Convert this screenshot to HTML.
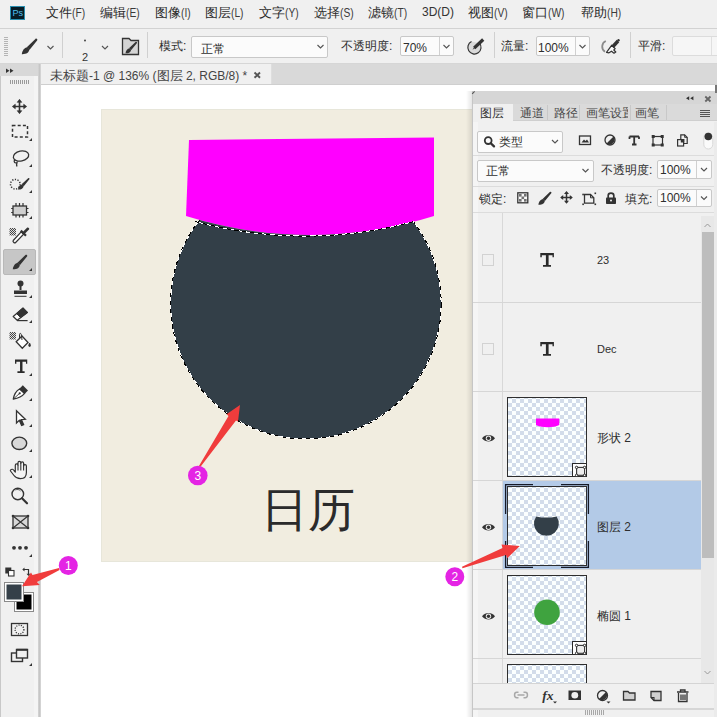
<!DOCTYPE html>
<html><head><meta charset="utf-8">
<style>
*{box-sizing:border-box;margin:0;padding:0}
html,body{width:717px;height:717px;overflow:hidden;background:#f0f0f0;font-family:"Liberation Sans",sans-serif;color:#2e2e2e;font-size:12px;position:relative}
.a{position:absolute}
.t{position:absolute;white-space:nowrap;line-height:1}
svg.o{position:absolute;left:0;top:0;width:717px;height:717px;overflow:visible}
.chk{border:1px solid #2e2e2e;background-color:#fbffff;background-image:linear-gradient(45deg,#d2dcea 25%,transparent 25%,transparent 75%,#d2dcea 75%),linear-gradient(45deg,#d2dcea 25%,transparent 25%,transparent 75%,#d2dcea 75%);background-size:8px 8px;background-position:0 1px,4px 5px}
.box{position:absolute;background:#fbfbfb;border:1px solid #c8c8c8;border-radius:2px}
</style></head><body>
<!-- menu bar -->
<div class="a" style="left:10px;top:6px;width:15px;height:14px;background:#071c26;border:1px solid #2a8fb0"></div>
<div class="t" style="left:12.5px;top:8.5px;font-size:9px;color:#52c0ee">Ps</div>
<div class="t" style="left:46px;top:6px;font-size:13px;color:#2a2a2a">文件<span style="font-size:12.5px;color:#3a3a3a;display:inline-block;transform:scaleX(0.82);transform-origin:0 0">(F)</span></div>
<div class="t" style="left:100px;top:6px;font-size:13px;color:#2a2a2a">编辑<span style="font-size:12.5px;color:#3a3a3a;display:inline-block;transform:scaleX(0.82);transform-origin:0 0">(E)</span></div>
<div class="t" style="left:155px;top:6px;font-size:13px;color:#2a2a2a">图像<span style="font-size:12.5px;color:#3a3a3a;display:inline-block;transform:scaleX(0.82);transform-origin:0 0">(I)</span></div>
<div class="t" style="left:205px;top:6px;font-size:13px;color:#2a2a2a">图层<span style="font-size:12.5px;color:#3a3a3a;display:inline-block;transform:scaleX(0.82);transform-origin:0 0">(L)</span></div>
<div class="t" style="left:259px;top:6px;font-size:13px;color:#2a2a2a">文字<span style="font-size:12.5px;color:#3a3a3a;display:inline-block;transform:scaleX(0.82);transform-origin:0 0">(Y)</span></div>
<div class="t" style="left:314px;top:6px;font-size:13px;color:#2a2a2a">选择<span style="font-size:12.5px;color:#3a3a3a;display:inline-block;transform:scaleX(0.82);transform-origin:0 0">(S)</span></div>
<div class="t" style="left:368px;top:6px;font-size:13px;color:#2a2a2a">滤镜<span style="font-size:12.5px;color:#3a3a3a;display:inline-block;transform:scaleX(0.82);transform-origin:0 0">(T)</span></div>
<div class="t" style="left:422px;top:6px;font-size:12px;color:#333">3D(D)</div>
<div class="t" style="left:468px;top:6px;font-size:13px;color:#2a2a2a">视图<span style="font-size:12.5px;color:#3a3a3a;display:inline-block;transform:scaleX(0.82);transform-origin:0 0">(V)</span></div>
<div class="t" style="left:522px;top:6px;font-size:13px;color:#2a2a2a">窗口<span style="font-size:12.5px;color:#3a3a3a;display:inline-block;transform:scaleX(0.82);transform-origin:0 0">(W)</span></div>
<div class="t" style="left:581px;top:6px;font-size:13px;color:#2a2a2a">帮助<span style="font-size:12.5px;color:#3a3a3a;display:inline-block;transform:scaleX(0.82);transform-origin:0 0">(H)</span></div>
<div class="a" style="left:0;top:28px;width:717px;height:1px;background:#d2d2d2"></div>

<!-- options bar -->
<div class="a" style="left:0;top:63px;width:717px;height:1px;background:#d6d6d6"></div>
<div class="a" style="left:62px;top:32px;width:1px;height:26px;background:#d0d0d0"></div>
<div class="a" style="left:147px;top:32px;width:1px;height:26px;background:#d0d0d0"></div>
<div class="a" style="left:494px;top:32px;width:1px;height:26px;background:#d0d0d0"></div>
<div class="a" style="left:630px;top:32px;width:1px;height:26px;background:#d0d0d0"></div>
<div class="t" style="left:82px;top:52px;font-size:11px;color:#333">2</div>
<div class="t" style="left:159px;top:40px">模式:</div>
<div class="box" style="left:191px;top:36px;width:137px;height:22px"></div>
<div class="t" style="left:201px;top:43px">正常</div>
<div class="t" style="left:341px;top:40px">不透明度:</div>
<div class="box" style="left:400px;top:36px;width:54px;height:20px"></div>
<div class="a" style="left:439px;top:37px;width:1px;height:18px;background:#d0d0d0"></div>
<div class="t" style="left:403px;top:41.5px">70%</div>
<div class="t" style="left:501px;top:40px">流量:</div>
<div class="box" style="left:536px;top:36px;width:54px;height:20px"></div>
<div class="a" style="left:575px;top:37px;width:1px;height:18px;background:#d0d0d0"></div>
<div class="t" style="left:538px;top:41.5px">100%</div>
<div class="t" style="left:638px;top:40px">平滑:</div>
<div class="box" style="left:672px;top:36px;width:60px;height:20px;background:#f6f6f6;border-color:#dcdcdc"></div>
<div class="a" style="left:711px;top:37px;width:1px;height:18px;background:#e0e0e0"></div>

<!-- toolbar -->
<div class="a" style="left:0;top:64px;width:40px;height:653px;background:#f0f0f0;border-left:1px solid #c8c8c8"></div>
<div class="a" style="left:0;top:64px;width:39px;height:12px;background:#d8d8d8"></div>
<div class="a" style="left:34px;top:76px;width:4px;height:641px;background:#f4f4f4"></div>
<div class="a" style="left:38px;top:64px;width:3px;height:653px;background:linear-gradient(to right,#d6d6d6,#c6c6c6,#dadada)"></div>
<div class="a" style="left:3px;top:249px;width:33px;height:26px;background:#c6c6c6;border-radius:2px;border:1px solid #b8b8b8"></div>

<!-- document area -->
<div class="a" style="left:41px;top:64px;width:676px;height:21px;background:#d9d9d9"></div>
<div class="a" style="left:41px;top:64px;width:231px;height:21px;background:#f0f0f0;border-right:1px solid #dedede"></div>
<div class="a" style="left:41px;top:84px;width:676px;height:1px;background:#cfcfcf"></div>
<div class="t" style="left:50px;top:69px;color:#444"><span style="font-size:13px;letter-spacing:0">未标题</span>-1 @ 136% (<span style="font-size:13px;letter-spacing:0">图层</span> 2, RGB/8) *</div>
<div class="a" style="left:41px;top:85px;width:676px;height:632px;background:#ffffff"></div>
<div class="a" style="left:101px;top:109px;width:380px;height:453px;background:#f1ede0;box-shadow:inset 0 0 0 1px #e7e6da"></div>
<div class="t" style="left:261px;top:486px;font-size:47px;color:#2b2b2b">日历</div>
<svg class="o" viewBox="0 0 717 717">
<g id="canvas">
<defs>
<clipPath id="belowArc"><path d="M100,216 L186,216 A414,414 0 0 0 434,216 L480,216 L480,600 L100,600 Z"/></clipPath>
</defs>
<path d="M189,140 L434,137.4 L434,216 A414,414 0 0 1 186,216 Z" fill="#ff00ff"/>
<g clip-path="url(#belowArc)">
<circle cx="305.9" cy="303.7" r="135.3" fill="#333f48"/>
<circle cx="305.9" cy="303.7" r="135.3" fill="none" stroke="#fff" stroke-width="1" shape-rendering="crispEdges"/>
<circle cx="305.9" cy="303.7" r="135.3" fill="none" stroke="#000" stroke-width="1" stroke-dasharray="4,4" shape-rendering="crispEdges"/>
</g>
<path d="M195.5,221.5 A414,414 0 0 0 414,221.5" fill="none" stroke="#fff" stroke-width="1" shape-rendering="crispEdges"/>
<path d="M195.5,221.5 A414,414 0 0 0 414,221.5" fill="none" stroke="#000" stroke-width="1" stroke-dasharray="4,4" shape-rendering="crispEdges"/>
</g>

</svg>

<!-- layers panel -->
<div class="a" style="left:466px;top:91px;width:6px;height:626px;background:linear-gradient(to right,rgba(0,0,0,0),rgba(0,0,0,0.10))"></div>
<div class="a" id="panel" style="left:472px;top:91px;width:245px;height:626px;background:#f0f0f0;border-left:1px solid #c6c6c6"></div>
<div class="a" style="left:473px;top:91px;width:5px;height:626px;background:#f5f5f5"></div>
<div class="a" style="left:473px;top:91px;width:244px;height:13px;background:#d6d6d6"></div>
<div class="a" style="left:473px;top:104px;width:244px;height:17px;background:#dadada;border-bottom:1px solid #cfcfcf"></div>
<div class="a" style="left:473px;top:104px;width:40px;height:18px;background:#f0f0f0"></div>
<div class="a" style="left:547px;top:105px;width:1px;height:15px;background:#c8c8c8"></div>
<div class="a" style="left:579px;top:105px;width:1px;height:15px;background:#c8c8c8"></div>
<div class="a" style="left:630px;top:105px;width:1px;height:15px;background:#c8c8c8"></div>
<div class="a" style="left:666px;top:105px;width:1px;height:15px;background:#c8c8c8"></div>
<div class="t" style="left:480px;top:107px;color:#333">图层</div>
<div class="t" style="left:520px;top:107px;color:#484848">通道</div>
<div class="t" style="left:554px;top:107px;color:#484848">路径</div>
<div class="t" style="left:586px;top:107px;color:#484848;width:42px;overflow:hidden">画笔设置</div>
<div class="t" style="left:635px;top:107px;color:#484848">画笔</div>

<div class="box" style="left:477px;top:131px;width:86px;height:22px"></div>
<div class="t" style="left:499px;top:136px">类型</div>
<div class="a" style="left:473px;top:155px;width:244px;height:1px;background:#dcdcdc"></div>
<div class="box" style="left:477px;top:160px;width:117px;height:22px"></div>
<div class="t" style="left:486px;top:165px">正常</div>
<div class="t" style="left:601px;top:164px">不透明度:</div>
<div class="box" style="left:657px;top:160px;width:55px;height:19px"></div>
<div class="a" style="left:696px;top:161px;width:1px;height:17px;background:#d0d0d0"></div>
<div class="t" style="left:660px;top:164px">100%</div>
<div class="a" style="left:473px;top:186px;width:244px;height:1px;background:#dcdcdc"></div>
<div class="t" style="left:479px;top:193px">锁定:</div>
<div class="t" style="left:625px;top:193px">填充:</div>
<div class="box" style="left:657px;top:189px;width:55px;height:18px"></div>
<div class="a" style="left:696px;top:190px;width:1px;height:16px;background:#d0d0d0"></div>
<div class="t" style="left:660px;top:192px">100%</div>
<div class="a" style="left:473px;top:212px;width:244px;height:1px;background:#dcdcdc"></div>

<!-- layer rows -->

<div class="a" style="left:502px;top:213px;width:1px;height:470px;background:#d8d8d8"></div>
<div class="a" style="left:473px;top:302px;width:228px;height:1px;background:#d6d6d6"></div>
<div class="a" style="left:473px;top:391px;width:228px;height:1px;background:#d6d6d6"></div>
<div class="a" style="left:473px;top:480px;width:228px;height:1px;background:#d6d6d6"></div>
<div class="a" style="left:503px;top:481px;width:198px;height:88px;background:#b3cae7"></div>
<div class="a" style="left:473px;top:569px;width:228px;height:1px;background:#d6d6d6"></div>
<div class="a" style="left:473px;top:658px;width:228px;height:1px;background:#d6d6d6"></div>
<div class="a" style="left:482px;top:254px;width:12px;height:12px;border:1px solid #d2d2d2"></div>
<div class="a" style="left:482px;top:343px;width:12px;height:12px;border:1px solid #d2d2d2"></div>
<div class="t" style="left:597px;top:255px;font-size:11px">23</div>
<div class="t" style="left:597px;top:344px;font-size:11px">Dec</div>
<div class="t" style="left:597px;top:432px">形状 2</div>
<div class="t" style="left:597px;top:521px">图层 2</div>
<div class="t" style="left:597px;top:610px">椭圆 1</div>
<!-- thumbnails -->
<div class="a chk" style="left:507px;top:397px;width:80px;height:80px"></div>
<div class="a chk" style="left:507px;top:486px;width:80px;height:80px"></div>
<div class="a chk" style="left:507px;top:575px;width:80px;height:80px"></div>
<div class="a chk" style="left:507px;top:664px;width:80px;height:19px;border-bottom:none"></div>
<!-- scrollbar -->
<div class="a" style="left:701px;top:216px;width:13px;height:467px;background:#e8e8e8"></div>
<div class="a" style="left:702px;top:232px;width:12px;height:326px;background:#bdbdbd"></div>
<!-- bottom bar -->
<div class="a" style="left:473px;top:683px;width:244px;height:1px;background:#d4d4d4"></div>
<div class="a" style="left:473px;top:684px;width:244px;height:24px;background:#f0f0f0"></div>
<div class="a" style="left:473px;top:708px;width:244px;height:2px;background:#d6d6d6"></div>
<div class="a" style="left:714px;top:122px;width:3px;height:595px;background:#ebebeb"></div>
<div class="a" style="left:715px;top:85px;width:2px;height:8px;background:#777"></div>


<svg class="o" viewBox="0 0 717 717" id="icons">
<defs><g id="brushI"><path d="M5.0,-7.0 L13.6,-15.3 C14.6,-16.3 16.3,-14.7 15.3,-13.7 L7.8,-4.5 Z" fill="#333"/><path d="M0,0 C0.3,-3.2 2.4,-6.6 5.6,-6.9 L7.6,-4.9 C7.4,-1.6 4.2,0.2 0,0 Z" fill="#333"/></g><pattern id="chk1" width="2" height="2" patternUnits="userSpaceOnUse"><rect width="1" height="1" fill="#444"/><rect x="1" y="1" width="1" height="1" fill="#444"/><rect x="1" width="1" height="1" fill="#ddd"/><rect y="1" width="1" height="1" fill="#ddd"/></pattern></defs>
<g id="tb" fill="none" stroke="#333" stroke-width="1.6">
<!-- >> header -->
<path d="M6,68.5 L9.5,70.7 L6,73 Z M10,68.5 L13.5,70.7 L10,73 Z" fill="#333" stroke="none"/>
<g stroke="#9a9a9a" stroke-width="1"><path d="M10.5,80V84M12.5,80V84M14.5,80V84M16.5,80V84M18.5,80V84M20.5,80V84M22.5,80V84M24.5,80V84M26.5,80V84M28.5,80V84"/></g>
<!-- move -->
<path d="M14,106.5H25M19.5,101V112" stroke-width="1.6"/>
<path d="M12.3,106.5L15.3,104.2V108.8Z M26.7,106.5L23.7,104.2V108.8Z M19.5,99.3L17.2,102.3H21.8Z M19.5,113.7L17.2,110.7H21.8Z" fill="#333" stroke="#333" stroke-width="0.6" stroke-linejoin="round"/>
<!-- marquee -->
<rect x="12.5" y="125.5" width="15" height="11.5" stroke-dasharray="3,2.2" stroke-width="1.5"/>
<!-- lasso -->
<ellipse cx="21" cy="156" rx="7.8" ry="5" transform="rotate(-12 21 156)" stroke-width="1.3"/>
<path d="M15,159.5 C13,162 15,163.5 17,162.5 C16.5,164 16.5,165.5 17,166.5" stroke-width="1.3"/>
<!-- quick select -->
<circle cx="15.3" cy="184.2" r="4.8" stroke-dasharray="1.2,1.5" stroke-width="1.5"/>
<use href="#brushI" transform="translate(17.9,189.6) scale(0.75)" stroke="none"/>
<!-- crop/content -->
<rect x="13" y="206" width="13.5" height="9" fill="#cfcfcf" stroke-width="1.3"/>
<path d="M11.2,208.5H13M11.2,212.5H13M26.5,208.5H28.5M26.5,212.5H28.5M16,203V206M19.5,203V206M23,203V206M16,215V217.5M19.5,215V217.5M23,215V217.5" stroke-width="1.2"/>
<!-- eyedropper -->
<rect x="9.5" y="228" width="6.5" height="7.5" fill="url(#chk1)" stroke="none"/>
<path d="M21.2,231.8 L13.2,240.5 C12.4,241.5 14.4,243.5 15.4,242.7 L23.6,234.2 Z" fill="#fff" stroke-width="1.2"/>
<path d="M20.8,230.6 L26,235.8" stroke-width="2.2"/>
<path d="M22.3,232.5 L27,227.8 C28,226.8 30,228.5 29,229.6 L24.3,234.3Z" fill="#333" stroke="none"/>
<!-- brush selected -->
<use href="#brushI" transform="translate(12.8,269.2) scale(0.93)" stroke="none"/>
<!-- stamp -->
<circle cx="20.5" cy="283.5" r="3" fill="#333" stroke="none"/>
<path d="M20.5,285V290" stroke-width="2"/>
<path d="M14,290.5H27V294H14Z" fill="#333" stroke="none"/>
<path d="M14.5,296.3H26.5" stroke-width="1"/>
<!-- eraser -->
<path d="M23,308 L27.4,312.5 L17.2,320.3 L13.2,316.5 Z" fill="#fff" stroke-width="1.2" stroke-linejoin="round"/>
<path d="M23,308 L27.4,312.5 L20.6,317.6 L16.6,313.6 Z" fill="#333" stroke="#333" stroke-width="1"/>
<path d="M17,320.6 H27.6" stroke-width="1.2"/>
<!-- bucket -->
<rect x="9.5" y="332" width="6.5" height="7.5" fill="url(#chk1)" stroke="none"/>
<path d="M16.2,341.8 L22,336 L28,342.5 L22.3,348.3Z" stroke-width="1.3" fill="#fff"/>
<path d="M19.5,338.5 L19.5,334.5 C19.5,333 21,333 21.3,334.5 L22,340" stroke-width="1"/>
<path d="M29.6,343 C28.5,345 28.3,346.5 29.6,346.5 C30.9,346.5 30.7,345 29.6,343Z" fill="#333" stroke-width="0.8"/>
<!-- T -->
<path d="M540.3,253 H553.9 V257.3 H552.5 V255.2 H548.6 V265 H551 V266.8 H543 V265 H545.9 V255.2 H541.8 V257.3 H540.3 Z" fill="#2a2a2a" stroke="none" transform="translate(15,359.6) scale(0.9,0.97) translate(-540.3,-253)"/>
<!-- pen -->
<path d="M19.6,389 C15.6,391.2 14,395 13.3,399.1 C17.4,398.4 21.8,396.8 24.6,393.4 Z" fill="#fff" stroke-width="1.3" stroke-linejoin="round"/>
<path d="M19.2,388.9 L22.8,385.3 L28,390.4 L24.8,393.8 Z" fill="#333" stroke="none"/>
<circle cx="19.7" cy="393.3" r="1.1" fill="#333" stroke="none"/>
<path d="M13.6,398.8 L19,393.9" stroke-width="0.9"/>
<!-- path select -->
<path d="M16.5,410.8 V423 L19.3,420.3 L21.6,425.5 L23.6,424.6 L21.3,419.5 L25.3,419.3 Z" fill="#fff" stroke-width="1.3" stroke-linejoin="miter"/>
<path d="M19.3,420.3 L21.6,425.5 L23.6,424.6 L21.3,419.5Z" fill="#333" stroke="none"/>
<!-- ellipse -->
<ellipse cx="19.3" cy="443.3" rx="7.4" ry="6.2" fill="#d8d8d8" stroke-width="1.4"/>
<!-- hand -->
<path d="M10.8,469.8 C11.8,468.8 13,469.2 14,470.5 L15.3,472 V465.3 C15.3,463.5 18,463.5 18,465.3 V462.8 C18,461 20.8,461 20.8,462.8 V463.3 C20.8,461.5 23.6,461.5 23.6,463.3 V466 C23.6,464.2 26.4,464.2 26.4,466 V472.5 C26.4,476.5 24,478.6 20.5,478.6 C17.5,478.6 15.5,477.5 14,475.5 L10.5,471 C10.2,470.5 10.3,470.1 10.8,469.8Z" fill="#f4f4f4" stroke-width="1.2" stroke-linejoin="round"/>
<path d="M18,465.3V470.5M20.8,462.8V470.5M23.6,463.3V470.5" stroke-width="1.1"/>
<!-- zoom -->
<circle cx="17.8" cy="494" r="5.8" stroke-width="1.4"/>
<path d="M22,498.3 L27,503.3" stroke-width="2.2" stroke-linecap="round"/>
<path d="M15.5,490 C17,489 19.5,489.5 20.5,491" stroke-width="0.8"/>
<!-- frame -->
<rect x="13" y="516" width="15" height="12" fill="#d8d8d8" stroke-width="1.3"/>
<path d="M13,516 L28,528 M28,516 L13,528" stroke-width="1.2"/>
<g fill="#333" stroke="none"><circle cx="13" cy="516" r="1.3"/><circle cx="28" cy="516" r="1.3"/><circle cx="13" cy="528" r="1.3"/><circle cx="28" cy="528" r="1.3"/></g>
<!-- dots -->
<g fill="#333" stroke="none"><circle cx="14" cy="547.8" r="1.9"/><circle cx="20" cy="547.8" r="1.9"/><circle cx="26" cy="547.8" r="1.9"/></g>
<!-- triangles -->
<g fill="#333" stroke="none">
<path d="M29,141 L32,138 V141Z M29,167 L32,164 V167Z M29,193 L32,190 V193Z M29,219 L32,216 V219Z M29,271 L32,268 V271Z M29,298 L32,295 V298Z M29,323 L32,320 V323Z M29,376 L32,373 V376Z M29,401 L32,398 V401Z M29,427 L32,424 V427Z M29,452 L32,449 V452Z M29,478 L32,475 V478Z M29,557 L32,554 V557Z M29,666 L32,663 V666Z"/>
</g>
<!-- default colors -->
<rect x="5.3" y="567.5" width="6" height="6" fill="#333" stroke="none"/>
<rect x="8.5" y="570.5" width="5.5" height="5.5" fill="#fff" stroke-width="1.1"/>
<!-- swap -->
<path d="M23,569.5 H28.5 V575" stroke-width="1.2"/>
<path d="M22.3,569.5 L24.5,567.5 V571.5Z M28.5,576 L26.5,573.8 H30.5Z" fill="#333" stroke="none"/>
<!-- swatches -->
<rect x="14.5" y="592.5" width="19" height="19" fill="#fff" stroke="#8a8a8a" stroke-width="1"/>
<rect x="16.5" y="594.5" width="15" height="15" fill="#000" stroke="none"/>
<rect x="4.5" y="582.5" width="19" height="19" fill="#fff" stroke="#8a8a8a" stroke-width="1"/>
<rect x="6.5" y="584.5" width="15" height="15" fill="#354049" stroke="none"/>
<!-- quick mask -->
<rect x="11.5" y="623.5" width="16" height="12" stroke-width="1.3"/>
<circle cx="19.5" cy="629.5" r="4.4" stroke-dasharray="1.1,1.3" stroke-width="1.3"/>
<!-- screen mode -->
<rect x="11.5" y="653" width="11" height="8.5" stroke-width="1.4" fill="#f0f0f0"/>
<rect x="16.5" y="649.5" width="11" height="8.5" stroke-width="1.4" fill="#f0f0f0"/>
<path d="M16.5,649.8H27.5" stroke-width="2"/>
</g>
</svg>
<svg class="o" viewBox="0 0 717 717">
<g id="panelicons" fill="none" stroke="#333" stroke-width="1.3">
<!-- options bar icons -->
<g stroke="#b4b4b4" stroke-width="1"><path d="M4,37.5H8M4,39.5H8M4,41.5H8M4,43.5H8M4,45.5H8M4,47.5H8M4,49.5H8M4,51.5H8M4,53.5H8M4,55.5H8"/></g>
<use href="#brushI" transform="translate(21.8,54.2) scale(1.0)" stroke="none"/>
<path d="M47.5,46 L50.5,49 L53.5,46" stroke="#555" stroke-width="1.15"/>
<circle cx="85" cy="40.5" r="0.9" fill="#333" stroke="none"/>
<path d="M102,46 L105,49 L108,46" stroke="#555" stroke-width="1.15"/>
<path d="M122.5,38.5 H129 L131,40.5 H138.5 V54.5 H122.5Z" fill="#d4d4d4" stroke-width="1.3"/>
<use href="#brushI" transform="translate(125.5,53.3) scale(0.74)" stroke="none"/>
<path d="M317.5,45 L320.5,48 L323.5,45" stroke="#555" stroke-width="1.15"/>
<path d="M443.5,45 L446.5,48 L449.5,45" stroke="#555" stroke-width="1.15"/>
<path d="M579.5,45 L582.5,48 L585.5,45" stroke="#555" stroke-width="1.15"/>
<!-- airbrush 1 -->
<path d="M479.5,43.2 A6.6,6.6 0 1 1 471.5,41.5" fill="#dadada" stroke-width="1.2"/>
<path d="M474.2,48 L483.2,39.5" stroke-width="3.2"/>
<path d="M472.5,49.8 L474.8,46.3 L476,47.6Z" fill="#333" stroke="none"/>
<!-- airbrush 2 -->
<path d="M605.8,41 A6.2,6.2 0 0 0 605,51.8" stroke="#8a8a8a" stroke-width="1.8"/>
<path d="M606.5,52.3 L611.8,45.2 L615.2,48.6 L613.8,50 L615.8,52 L614,53.2 L611.5,51.2 L609,52.8Z" fill="#f8f8f8" stroke-width="1.2" stroke-linejoin="round"/>
<path d="M612.5,47 L618,41" stroke-width="3.4"/>
<circle cx="618.5" cy="40.3" r="1.2" fill="#333" stroke="none"/>
<path d="M254.5,72.5 L260,77.8 M260,72.5 L254.5,77.8" stroke="#555" stroke-width="1.9"/>
<!-- panel header -->
<path d="M472.2,93.8 L474.6,91.3" stroke="#555" stroke-width="1.1"/>
<path d="M686,98.3 L689.2,96.3 V100.3Z M690.2,98.3 L693.4,96.3 V100.3Z" fill="#333" stroke="none"/>
<path d="M705.3,96.5 L710.5,101.5 M710.5,96.5 L705.3,101.5" stroke="#666" stroke-width="1.8"/>
<path d="M700,110.5H710M700,112.5H710M700,114.5H710M700,116.5H710" stroke="#555" stroke-width="1"/>
<!-- search row -->
<circle cx="488.2" cy="140.6" r="3.4" stroke-width="1.8"/>
<path d="M490.8,143.2 L494,146.4" stroke-width="2.3" stroke-linecap="round"/>
<path d="M552,140 L555,143 L558,140" stroke="#555" stroke-width="1.15"/>
<rect x="579.5" y="136" width="11" height="8.5" stroke-width="1.3"/>
<path d="M581.5,142.5 L584,139.5 L585.5,141 L587,139.5 L589,142.5Z" fill="#333" stroke="none"/>
<circle cx="610" cy="140" r="5" stroke-width="1.3"/>
<path d="M613.5,136.5 A5,5 0 0 1 606.5,143.5Z" fill="#333" stroke="none"/>
<path d="M629.5,136.5H639M629.5,136.5V139M639,136.5V139M634.2,136.5V144.5M632,144.5H636.5" stroke-width="1.8"/>
<rect x="653" y="136.5" width="9.5" height="8.5" stroke-width="1.2"/>
<g fill="#333" stroke="none"><rect x="651.7" y="135" width="3" height="3"/><rect x="660.7" y="135" width="3" height="3"/><rect x="651.7" y="143.5" width="3" height="3"/><rect x="660.7" y="143.5" width="3" height="3"/></g>
<path d="M680.8,139 V134.8 H684.6 L687.2,137.4 V143.5 H683.5" stroke-width="1.2"/>
<path d="M684.6,134.8 V137.4 H687.2" stroke-width="0.9"/>
<rect x="677.6" y="139.6" width="6" height="6.4" stroke-width="1.2" fill="#f0f0f0"/>
<rect x="680.8" y="139" width="3.5" height="3.5" fill="#333" stroke="none"/>
<rect x="703.8" y="133" width="9" height="16" rx="4.5" fill="#fafafa" stroke="#d8d8d8" stroke-width="1"/>
<circle cx="708.3" cy="136.5" r="3.8" fill="#333" stroke="none"/>
<!-- blend chevrons -->
<path d="M582.5,169 L585.5,172 L588.5,169" stroke="#555" stroke-width="1.15"/>
<path d="M701,168 L704,171 L707,168" stroke="#555" stroke-width="1.15"/>
<path d="M701,196.5 L704,199.5 L707,196.5" stroke="#555" stroke-width="1.15"/>
<!-- lock icons -->
<rect x="517.8" y="192.8" width="10" height="10" stroke-width="1.3" fill="#f8f8f8"/>
<g fill="#707070" stroke="none"><rect x="519" y="194" width="2.6" height="2.6"/><rect x="524" y="194" width="2.6" height="2.6"/><rect x="521.5" y="196.5" width="2.6" height="2.6"/><rect x="519" y="199" width="2.6" height="2.6"/><rect x="524" y="199" width="2.6" height="2.6"/></g>
<use href="#brushI" transform="translate(538.4,204.8) scale(0.84)" stroke="none"/>
<path d="M561.5,197.5 H571.5 M566.5,192.5 V202.5" stroke-width="1.5"/>
<path d="M560.2,197.5 L563.2,195 V200Z M572.8,197.5 L569.8,195 V200Z M566.5,191 L564,194 H569Z M566.5,203.8 L564,200.8 H569Z" fill="#333" stroke="none"/>
<path d="M584.5,194.5 H590.5 L593.8,197.8 V203.2 H584.5 Z" stroke-width="1.3"/>
<path d="M590.5,194.5 V197.8 H593.8" stroke-width="1"/>
<g fill="#333" stroke="none"><rect x="582.3" y="193.7" width="1.6" height="1.6"/><rect x="594.5" y="192.5" width="1.6" height="1.6"/><rect x="582.3" y="203.5" width="1.6" height="1.6"/><rect x="594.5" y="203.5" width="1.6" height="1.6"/></g>
<rect x="606" y="197.5" width="10" height="6.5" rx="0.8" fill="#333" stroke="none"/>
<path d="M608.2,198 V195.5 C608.2,192.3 613.8,192.3 613.8,195.5 V198" stroke-width="1.7"/>
<circle cx="611" cy="200.5" r="1" fill="#f0f0f0" stroke="none"/>
<!-- T icons in rows -->
<path d="M540.3,253 H553.9 V257.3 H552.5 V255.2 H548.6 V265 H551 V266.8 H543 V265 H545.9 V255.2 H541.8 V257.3 H540.3 Z" fill="#2a2a2a" stroke="none"/>
<path d="M540.3,253 H553.9 V257.3 H552.5 V255.2 H548.6 V265 H551 V266.8 H543 V265 H545.9 V255.2 H541.8 V257.3 H540.3 Z" fill="#2a2a2a" stroke="none" transform="translate(0,89)"/>
<!-- eyes -->
<g id="eye">
<path d="M482,438.2 C485.5,433.8 491.5,433.8 495,438.2 C491.5,442.6 485.5,442.6 482,438.2Z" fill="#333" stroke="none"/>
<circle cx="488.5" cy="438.2" r="2.7" fill="#f0f0f0" stroke="none"/>
<circle cx="488.5" cy="438.2" r="1.7" fill="#333" stroke="none"/>
</g>
<use href="#eye" y="89"/>
<use href="#eye" y="178"/>
<!-- thumbnail contents -->
<path d="M536,418.5 H559.3 V425 C553,428 542,428 536,425Z" fill="#ff00ff" stroke="none"/>
<path d="M536.2,516.4 Q546.5,518.8 556.6,516.4 A12.4,12.4 0 1 1 536.2,516.4 Z" fill="#333f48" stroke="none"/>
<circle cx="547" cy="612.3" r="12.8" fill="#3fa33f" stroke="none"/>
<!-- shape badges -->
<g id="badge">
<rect x="572.5" y="463.5" width="14" height="13" fill="#fdfdfd" stroke="#2a2a2a" stroke-width="1"/>
<rect x="576.6" y="467.4" width="8" height="7.9" fill="#eeeeee" stroke-width="1.1"/>
<g fill="#fff" stroke="#2a2a2a" stroke-width="1"><circle cx="576.6" cy="467.4" r="1.2"/><circle cx="584.6" cy="467.4" r="1.2"/><circle cx="576.6" cy="475.3" r="1.2"/><circle cx="584.6" cy="475.3" r="1.2"/></g>
</g>
<use href="#badge" y="178"/>
<!-- selected frame -->
<g stroke="#151a28" stroke-width="1.3" fill="none">
<path d="M533,484.6 H505.6 V514 M505.6,541 V567.4 H533 M561,484.6 H588.4 V514 M588.4,541 V567.4 H561"/>
</g>
<!-- scroll arrows -->
<path d="M704.5,227 L707.5,224 L710.5,227" stroke="#999" stroke-width="1"/>
<path d="M704.5,671 L707.5,674 L710.5,671" stroke="#999" stroke-width="1"/>
<!-- bottom bar icons -->
<g stroke="#a8a8a8" stroke-width="1.5"><path d="M518.5,692.3 H516.8 C513.8,692.3 513.8,697.7 516.8,697.7 H518.5 M523.5,692.3 H525.2 C528.2,692.3 528.2,697.7 525.2,697.7 H523.5 M517.5,695 H524.5"/></g>
<text x="542.3" y="700.3" font-family="Liberation Serif" font-style="italic" font-weight="bold" font-size="13.5" fill="#333" stroke="none">fx</text>
<path d="M553,701.5 H557 L555,703.5Z M606.5,701.5 H610.5 L608.5,703.5Z" fill="#333" stroke="none"/>
<rect x="568.5" y="690.5" width="12.5" height="9.5" fill="#333" stroke="none"/>
<ellipse cx="574.8" cy="695.3" rx="3.4" ry="3.2" fill="#f0f0f0" stroke="none"/>
<circle cx="602.5" cy="695.5" r="5" stroke-width="1.3"/>
<path d="M606,692 A5,5 0 0 1 599,699Z" fill="#333" stroke="none"/>
<path d="M623.5,700 V691.5 H628 L629.5,693 H635 V700Z" fill="#d0d0d0" stroke-width="1.3"/>
<path d="M654,691.5 H661 V700.5 H654 L651,697.5 V691.5Z" fill="#d0d0d0" stroke-width="1.3"/>
<path d="M651,697.5 H654 V700.5" stroke-width="1.1"/>
<path d="M677,692 H688.5 M680.5,692 V690 H685 V692 M678.5,693 V701.5 H687 V693 M681,694.5 V700 M683,694.5 V700 M685,694.5 V700" stroke-width="1.3"/>
<g stroke="#a8a8a8" stroke-width="1"><path d="M585.5,710V715M587.5,710V715M589.5,710V715M591.5,710V715M593.5,710V715M595.5,710V715M597.5,710V715M599.5,710V715M601.5,710V715M603.5,710V715"/></g>
</g>
<g id="annot">
<path d="M59,568 L32.5,575 L31,572.5 L22,586.2 L39.8,585 L37,582 L59.5,570Z" fill="#f03c3c"/>
<circle cx="68.3" cy="565.5" r="9.5" fill="#e424e4"/>
<path d="M198.8,466.3 L228.5,416 L226.5,414.2 L240,405 L238,421.6 L236,420.5 L200.3,467Z" fill="#f03c3c"/>
<circle cx="197.8" cy="475.5" r="9.8" fill="#e424e4"/>
<path d="M462,566.8 L502.5,548 L501.5,544.5 L519.8,546 L507.2,558.2 L506,555 L462.5,568.3Z" fill="#f03c3c"/>
<circle cx="454.8" cy="576.8" r="9.5" fill="#e424e4"/>
<g fill="#fff" font-family="Liberation Sans" font-size="12" text-anchor="middle"><text x="68.3" y="569.5">1</text><text x="197.8" y="479.5">3</text><text x="454.8" y="581">2</text></g></g></svg>
</body></html>
